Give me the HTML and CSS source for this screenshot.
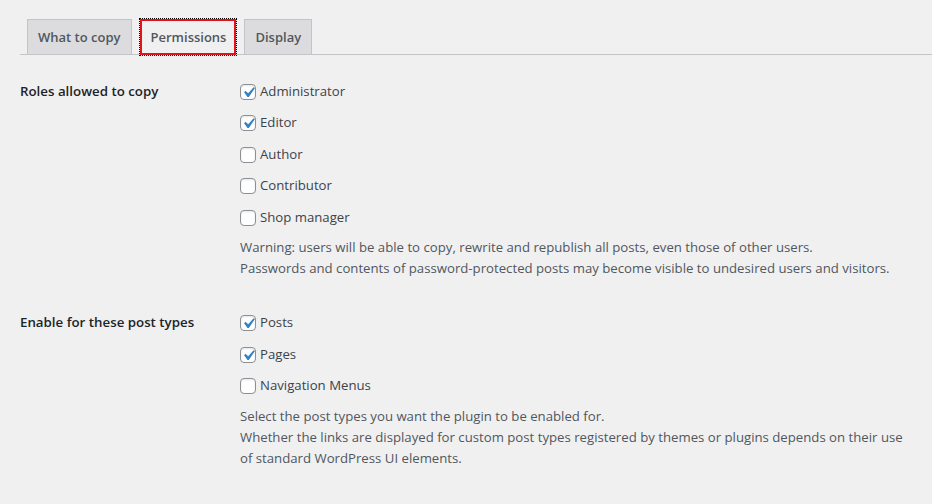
FILE: index.html
```html
<!DOCTYPE html>
<html lang="en">
<head>
<meta charset="utf-8">
<title>Permissions</title>
<link rel="stylesheet" href="styles.css">
</head>
<body>
<div class="wrap">
  <nav class="tabs">
    <a class="tab" href="#">What to copy</a>
    <a class="tab active" href="#">Permissions</a>
    <a class="tab" href="#">Display</a>
  </nav>
  <div class="form">
    <div class="row">
      <div class="th">Roles allowed to copy</div>
      <div class="td">
        <div class="opts">
          <label class="opt"><span class="box"><svg viewBox="0 0 20 20" class="check"><path d="M14.83 4.89l1.34.94-5.81 8.38H9.02L5.78 9.67l1.34-1.25 2.57 2.4z"/></svg></span>Administrator</label>
          <label class="opt"><span class="box"><svg viewBox="0 0 20 20" class="check"><path d="M14.83 4.89l1.34.94-5.81 8.38H9.02L5.78 9.67l1.34-1.25 2.57 2.4z"/></svg></span>Editor</label>
          <label class="opt"><span class="box"></span>Author</label>
          <label class="opt"><span class="box"></span>Contributor</label>
          <label class="opt"><span class="box"></span>Shop manager</label>
        </div>
        <p class="desc">Warning: users will be able to copy, rewrite and republish all posts, even those of other users.<br>Passwords and contents of password-protected posts may become visible to undesired users and visitors.</p>
      </div>
    </div>
    <div class="row">
      <div class="th">Enable for these post types</div>
      <div class="td">
        <div class="opts">
          <label class="opt"><span class="box"><svg viewBox="0 0 20 20" class="check"><path d="M14.83 4.89l1.34.94-5.81 8.38H9.02L5.78 9.67l1.34-1.25 2.57 2.4z"/></svg></span>Posts</label>
          <label class="opt"><span class="box"><svg viewBox="0 0 20 20" class="check"><path d="M14.83 4.89l1.34.94-5.81 8.38H9.02L5.78 9.67l1.34-1.25 2.57 2.4z"/></svg></span>Pages</label>
          <label class="opt"><span class="box"></span>Navigation Menus</label>
        </div>
        <p class="desc narrow">Select the post types you want the plugin to be enabled for.<br>Whether the links are displayed for custom post types registered by themes or plugins depends on their use of standard WordPress UI elements.</p>
      </div>
    </div>
  </div>
</div>
</body>
</html>
```

FILE: styles.css
```css
html, body {
  margin: 0;
  padding: 0;
  background: #f0f0f1;
}
body {
  font-family: "Open Sans", "Noto Sans", sans-serif;
  font-size: 13.2px;
  color: #3c434a;
}
.wrap {
  padding-left: 20px;
}
.tabs {
  display: flex;
  padding-top: 19px;
  padding-left: 7px;
  border-bottom: 1px solid #c3c4c7;
}
.tab {
  display: block;
  margin-right: 8px;
  margin-bottom: -1px;
  padding: 5px 10px;
  font-size: 13px;
  line-height: 24px;
  font-weight: 600;
  color: #50575e;
  text-decoration: none;
  background: #dcdcde;
  border: 1px solid #c3c4c7;
}
.tab.active {
  background: #f0f0f1;
  border: 2px solid #e3121b;
  padding: 4px 8px 4px 9px;
  outline: 1px dotted #000;
  outline-offset: 0;
}
.form {
  margin-top: 7px;
}
.row {
  display: flex;
}
.th {
  width: 200px;
  flex: none;
  padding: 20px 10px 20px 0;
  font-size: 13.3px;
  line-height: 18.2px;
  font-weight: 600;
  color: #1d2327;
}
.td {
  flex: 1;
  padding: 15px 10px 14px;
}
.opts {
  display: flex;
  flex-direction: column;
  align-items: flex-start;
}
.opt {
  display: flex;
  align-items: center;
  margin: 4.9px 0 7px;
  line-height: 19.6px;
  font-size: 13.2px;
  color: #3c434a;
}
.box {
  position: relative;
  width: 14px;
  height: 14px;
  margin-right: 4px;
  border: 1px solid #8c8f94;
  border-radius: 4px;
  background: #fff;
  box-shadow: inset 0 1px 2px rgba(0, 0, 0, 0.1);
}
.check {
  position: absolute;
  left: -3px;
  top: -3px;
  width: 21px;
  height: 21px;
  fill: #3582c4;
}
.desc {
  margin: 3px 0 0;
  font-size: 13.2px;
  line-height: 21px;
  color: #50575e;
}
.desc.narrow {
  max-width: 670px;
}
```
